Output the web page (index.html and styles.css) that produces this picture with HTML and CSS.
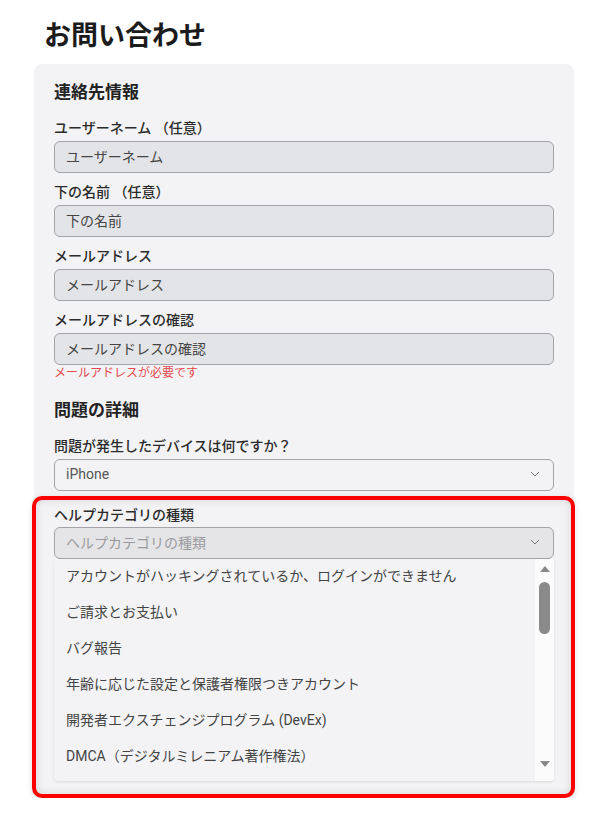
FILE: index.html
```html
<!DOCTYPE html>
<html lang="ja">
<head>
    <meta charset="UTF-8">
    <meta name="viewport" content="width=device-width, initial-scale=1.0">
    <title>お問い合わせ</title>
    <link rel="stylesheet" href="styles.css">
</head>
<body>
    <div class="page">
        <h1 class="page-title">お問い合わせ</h1>

        <div class="card">
            <h2 class="section-title">連絡先情報</h2>

            <div class="field">
                <label class="field-label">ユーザーネーム （任意）</label>
                <div class="input">ユーザーネーム</div>
            </div>
            <div class="field">
                <label class="field-label">下の名前 （任意）</label>
                <div class="input">下の名前</div>
            </div>
            <div class="field">
                <label class="field-label">メールアドレス</label>
                <div class="input">メールアドレス</div>
            </div>
            <div class="field field-error">
                <label class="field-label">メールアドレスの確認</label>
                <div class="input">メールアドレスの確認</div>
                <div class="error-text">メールアドレスが必要です</div>
            </div>

            <h2 class="section-title section-gap">問題の詳細</h2>

            <div class="field field-last">
                <label class="field-label">問題が発生したデバイスは何ですか？</label>
                <div class="select">
                    <span>iPhone</span>
                    <svg class="chevron" width="10" height="6" viewBox="0 0 10 6"><path d="M1 1l4 4 4-4" fill="none" stroke="#777" stroke-width="1"/></svg>
                </div>
            </div>

            <div class="highlight">
                <label class="field-label">ヘルプカテゴリの種類</label>
                <div class="select select-open">
                    <span>ヘルプカテゴリの種類</span>
                    <svg class="chevron" width="10" height="6" viewBox="0 0 10 6"><path d="M1 1l4 4 4-4" fill="none" stroke="#777" stroke-width="1"/></svg>
                </div>
                <div class="dropdown">
                    <ul class="options">
                        <li>アカウントがハッキングされているか、ログインができません</li>
                        <li>ご請求とお支払い</li>
                        <li>バグ報告</li>
                        <li>年齢に応じた設定と保護者権限つきアカウント</li>
                        <li>開発者エクスチェンジプログラム (DevEx)</li>
                        <li>DMCA（デジタルミレニアム著作権法）</li>
                    </ul>
                    <div class="scrollbar">
                        <svg width="10" height="6" viewBox="0 0 10 6"><path d="M5 0l5 6H0z" fill="#888"/></svg>
                        <div class="scroll-track">
                            <div class="scroll-thumb"></div>
                        </div>
                        <svg width="10" height="6" viewBox="0 0 10 6"><path d="M0 0h10L5 6z" fill="#888"/></svg>
                    </div>
                </div>
            </div>
        </div>
    </div>
</body>
</html>
```

FILE: styles.css
```css
body {
    margin: 0;
    background: #ffffff;
    font-family: Roboto, "Noto Sans CJK JP", sans-serif;
    color: #222;
}

.page {
    width: 540px;
    padding: 0 29px 0 34px;
}

.page-title {
    margin: 18px 0 10px 10px;
    font-size: 27px;
    line-height: 36px;
    font-weight: 700;
    color: #1b1b1b;
}

.card {
    background: #f3f3f5;
    border-radius: 8px;
    padding: 16px 20px 0;
}

.section-title {
    margin: 0 0 14px;
    font-size: 17px;
    line-height: 24px;
    font-weight: 700;
    color: #222;
}

.section-gap {
    margin-top: 17px;
}

.field {
    margin-bottom: 9px;
}

.field-error,
.field-last {
    margin-bottom: 0;
}

.field-label {
    display: block;
    font-size: 14px;
    line-height: 20px;
    font-weight: 500;
    color: #2a2a2a;
    margin-bottom: 3px;
}

.input,
.select {
    box-sizing: border-box;
    height: 32px;
    border: 1px solid #a3a3a8;
    border-radius: 6px;
    background: #e3e4e8;
    padding: 0 11px 2px;
    display: flex;
    align-items: center;
    font-size: 14px;
    color: #444;
}

.error-text {
    font-size: 12px;
    line-height: 16px;
    color: #e5484d;
}

.select {
    background: #f3f3f5;
    justify-content: space-between;
    padding-right: 13px;
    color: #555;
}

.chevron {
    display: block;
}

.highlight {
    margin: 5px -21px 0 -22px;
    padding: 5px 17px 13px 18px;
    border: 4px solid #ff0000;
    border-radius: 10px;
    box-shadow: inset 0 0 8px rgba(0, 0, 0, 0.12), 0 2px 6px rgba(0, 0, 0, 0.12);
}

.highlight .field-label {
    margin-bottom: 2px;
}

.select-open {
    background: #e5e5e7;
    color: #9a9a9e;
}

.dropdown {
    display: flex;
    height: 222px;
    background: #f3f3f6;
    border-radius: 0 0 4px 4px;
    overflow: hidden;
    box-shadow: 0 1px 3px rgba(0, 0, 0, 0.1);
}

.options {
    flex: 1;
    list-style: none;
    margin: 0;
    padding: 0;
}

.options li {
    height: 36px;
    line-height: 35px;
    padding-left: 12px;
    font-size: 14px;
    color: #444;
    white-space: nowrap;
}

.scrollbar {
    width: 19px;
    background: #fbfbfb;
    display: flex;
    flex-direction: column;
    align-items: center;
    padding: 7px 0 14px;
    box-sizing: border-box;
}

.scroll-track {
    flex: 1;
    width: 100%;
    display: flex;
    justify-content: center;
    padding-top: 10px;
}

.scroll-thumb {
    width: 11px;
    height: 52px;
    border-radius: 6px;
    background: #8a8a8a;
}
```
